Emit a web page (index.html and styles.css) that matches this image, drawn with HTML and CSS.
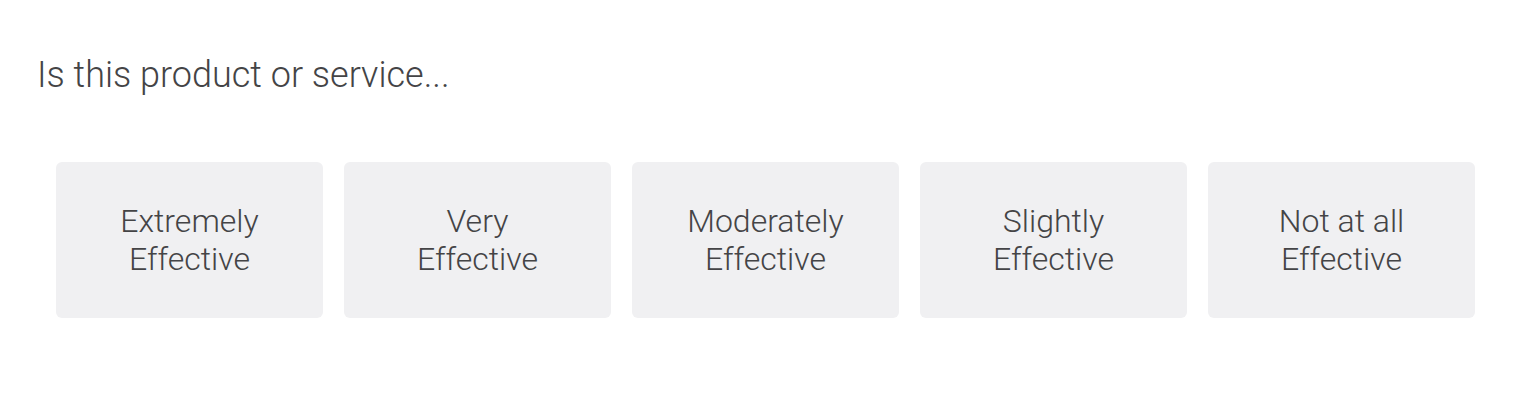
FILE: index.html
```html
<!DOCTYPE html>
<html>
<head>
<meta charset="utf-8">
<link rel="stylesheet" href="styles.css">
</head>
<body>
<main class="survey">
  <h1 class="question">Is this product or service...</h1>
  <div class="options">
    <button class="option">Extremely<br>Effective</button>
    <button class="option">Very<br>Effective</button>
    <button class="option">Moderately<br>Effective</button>
    <button class="option">Slightly<br>Effective</button>
    <button class="option">Not at all<br>Effective</button>
  </div>
</main>
</body>
</html>
```
FILE: styles.css
```css
html, body {
  margin: 0;
  background: #ffffff;
}
body {
  font-family: Roboto, "Liberation Sans", sans-serif;
  color: #444446;
}
.survey {
  padding: 53px 59px 0 56px;
}
.question {
  margin: 0 0 0 -19px;
  font-size: 36px;
  font-weight: 300;
  line-height: 44px;
}
.options {
  display: grid;
  grid-template-columns: repeat(5, 1fr);
  gap: 21px;
  margin-top: 65px;
}
.option {
  height: 156px;
  border: none;
  border-radius: 6px;
  background: #f0f0f2;
  font-family: inherit;
  color: #444446;
  font-size: 32px;
  font-weight: 300;
  line-height: 38px;
  padding: 0;
}
```
